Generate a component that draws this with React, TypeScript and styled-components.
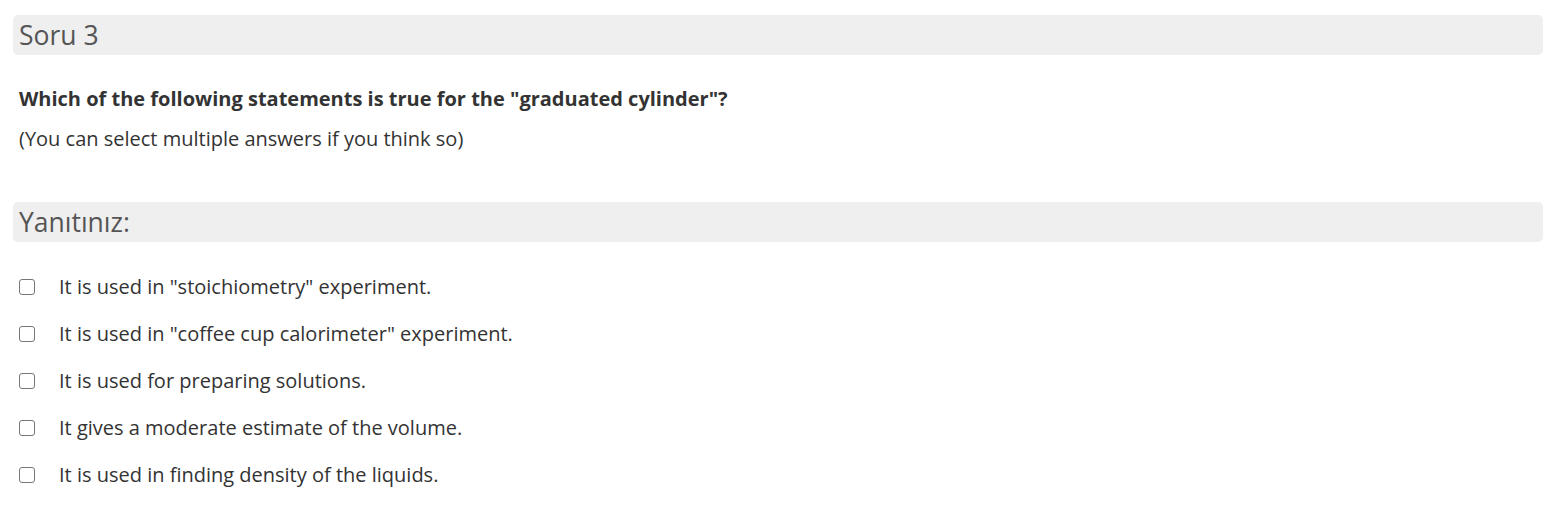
import * as React from "react";
import styled, { createGlobalStyle } from "styled-components";

const GlobalStyle = createGlobalStyle`
  html, body {
    margin: 0;
    padding: 0;
    background: #ffffff;
  }
  body {
    font-family: "Open Sans", "Noto Sans", sans-serif;
    color: #333333;
  }
`;

const OPTIONS = [
  'It is used in "stoichiometry" experiment.',
  'It is used in "coffee cup calorimeter" experiment.',
  "It is used for preparing solutions.",
  "It gives a moderate estimate of the volume.",
  "It is used in finding density of the liquids.",
];

export default function App() {
  return (
    <>
      <GlobalStyle />
      <Page>
        <SectionTitle>Soru 3</SectionTitle>
        <QuestionBody>
          <Question>Which of the following statements is true for the "graduated cylinder"?</Question>
          <Hint>(You can select multiple answers if you think so)</Hint>
        </QuestionBody>
        <SectionTitle>Yanıtınız:</SectionTitle>
        <AnswerList>
          {OPTIONS.map(text => (
            <Answer key={text}>
              <Box type="checkbox" />
              <AnswerText>{text}</AnswerText>
            </Answer>
          ))}
        </AnswerList>
      </Page>
    </>
  );
}

const Page = styled.div`
  display: flex;
  flex-direction: column;
  padding: 15px 1px 0 13px;
`;

const SectionTitle = styled.div`
  box-sizing: border-box;
  height: 40px;
  padding: 0 6px;
  display: flex;
  align-items: center;
  border-radius: 5px;
  background-color: #efefef;
  color: #555555;
  font-size: 26.5px;
  font-weight: 400;
`;

const QuestionBody = styled.div`
  display: flex;
  flex-direction: column;
  gap: 12px;
  padding: 30px 6px 49px;
`;

const Question = styled.div`
  font-size: 20px;
  font-weight: 700;
  line-height: 28px;
`;

const Hint = styled.div`
  font-size: 20px;
  line-height: 28px;
`;

const AnswerList = styled.div`
  display: flex;
  flex-direction: column;
  gap: 19px;
  padding: 31px 6px 0;
`;

const Answer = styled.label`
  display: flex;
  align-items: center;
  gap: 24px;
  font-size: 20px;
  line-height: 28px;
`;

const Box = styled.input`
  appearance: none;
  box-sizing: border-box;
  width: 16px;
  height: 16px;
  margin: 0;
  border: 1px solid #767676;
  border-radius: 3px;
  background: #ffffff;
`;

const AnswerText = styled.span`
  color: #333333;
`;
